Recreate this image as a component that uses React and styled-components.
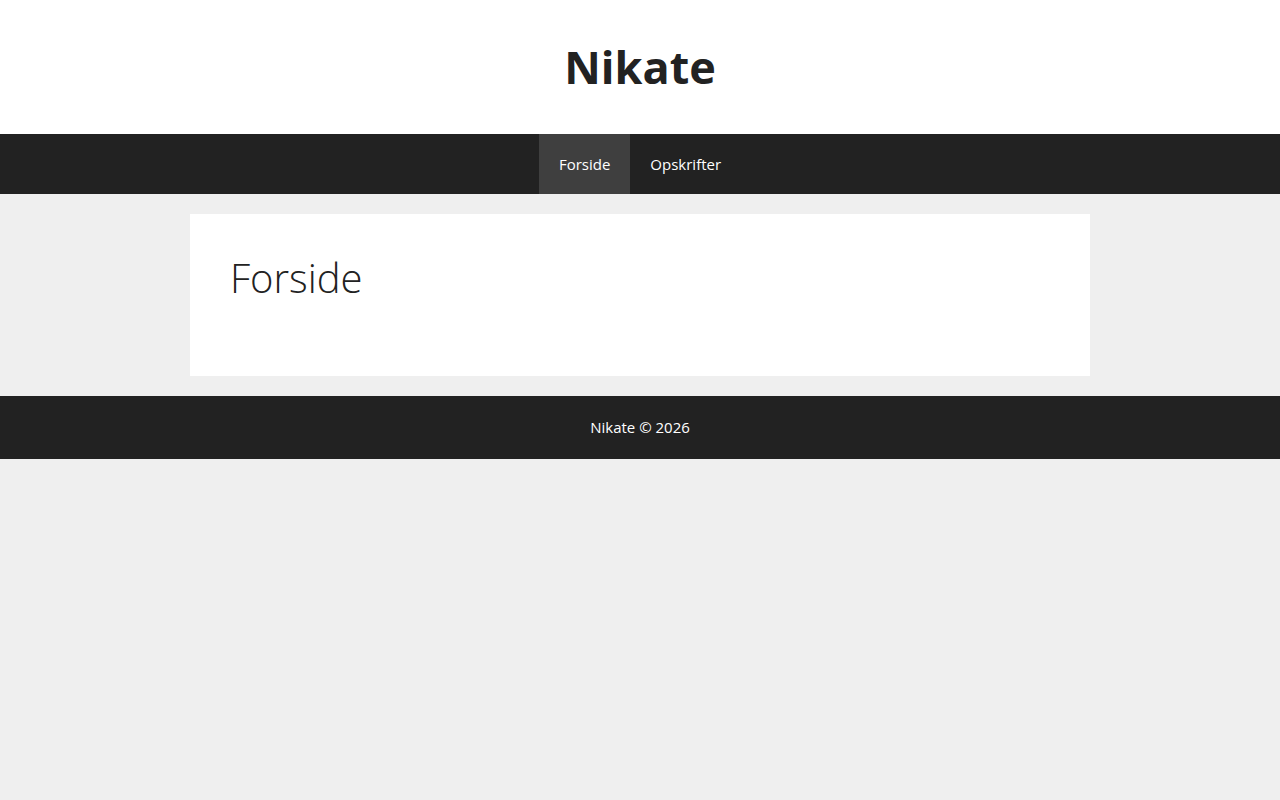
import React from "react";
import styled, { createGlobalStyle } from "styled-components";

const GlobalStyle = createGlobalStyle`
  html, body {
    margin: 0;
    padding: 0;
  }
  body {
    background: #efefef;
    font-family: "Open Sans", "Liberation Sans", sans-serif;
    font-size: 17px;
    line-height: 1.5;
    color: #3a3a3a;
  }
`;

const Header = styled.header`
  background: #fff;
  padding: 40px;
  text-align: center;
`;

const SiteTitle = styled.p`
  margin: 0;
  font-size: 45px;
  font-weight: 700;
  line-height: 1.2;
  color: #222;
`;

const Nav = styled.nav`
  background: #222;
  display: flex;
  justify-content: center;
`;

const NavItem = styled.a`
  display: block;
  padding: 0 20px;
  line-height: 60px;
  font-size: 15px;
  color: #fff;
  text-decoration: none;
  background: ${(p) => (p.$active ? "#3f3f3f" : "transparent")};
`;

const Main = styled.main`
  max-width: 900px;
  margin: 20px auto;
`;

const Card = styled.article`
  background: #fff;
  padding: 40px;
`;

const PageTitle = styled.h1`
  margin: 0 0 34px;
  font-size: 40px;
  font-weight: 300;
  line-height: 1.2;
  color: #222;
`;

const Footer = styled.footer`
  background: #222;
  color: #fff;
  padding: 20px;
  text-align: center;
  font-size: 15px;
  line-height: 1.5;
`;

const App = () => (
  <>
    <GlobalStyle />
    <Header>
      <SiteTitle>Nikate</SiteTitle>
    </Header>
    <Nav>
      <NavItem href="#" $active>Forside</NavItem>
      <NavItem href="#">Opskrifter</NavItem>
    </Nav>
    <Main>
      <Card>
        <PageTitle>Forside</PageTitle>
      </Card>
    </Main>
    <Footer>Nikate © 2026</Footer>
  </>
);

export default App;
